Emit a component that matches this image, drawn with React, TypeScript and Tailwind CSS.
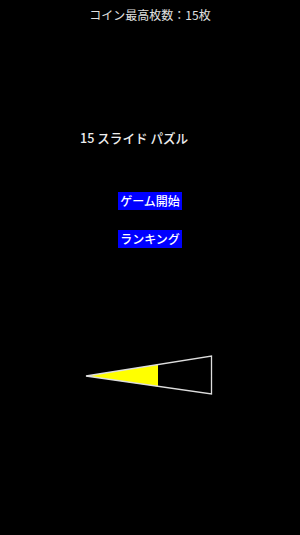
import React from "react";

export default function App() {
  return (
    <div
      className="w-[300px] h-[535px] bg-black flex flex-col"
      style={{ fontFamily: '"Noto Sans CJK JP", "Noto Sans", sans-serif' }}
    >
      <div className="h-[30px] flex items-center justify-center text-[12px] text-[#e0e0e0]">
        コイン最高枚数：15枚
      </div>
      <div className="mt-[98px] ml-[80px] h-[20px] leading-[20px] text-[12.6px] font-medium text-[#eeeeee]">
        15 スライド パズル
      </div>
      <div className="mt-[44px] flex flex-col items-center gap-[20px]">
        <div className="bg-[#0000ff] text-white text-[12px] font-medium leading-[18px] h-[18px] px-[2px]">
          ゲーム開始
        </div>
        <div className="bg-[#0000ff] text-white text-[12px] font-medium leading-[18px] h-[18px] px-[2px]">
          ランキング
        </div>
      </div>
      <svg className="mt-[102px] block" width="300" height="50" viewBox="0 0 300 50">
        <polygon points="86,26 158,14.5 158,36.4" fill="#ffff00" />
        <polygon
          points="86,26 211.5,6 211.5,44"
          fill="none"
          stroke="#dddddd"
          strokeWidth="1.3"
        />
      </svg>
    </div>
  );
}
